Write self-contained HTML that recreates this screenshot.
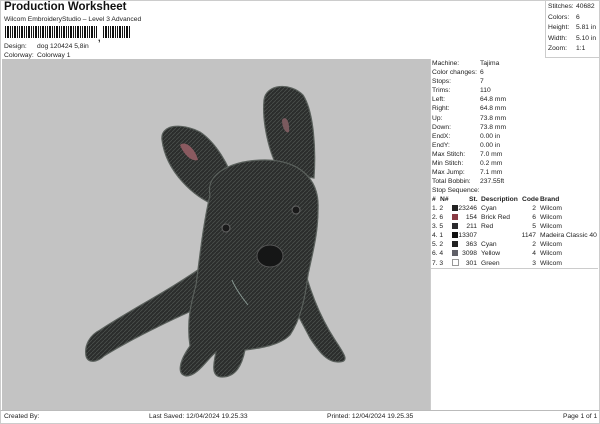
<!DOCTYPE html>
<html><head><style>
body{margin:0;width:600px;height:424px;background:#fff;position:relative;overflow:hidden;font-family:"Liberation Sans",sans-serif;color:#222}
.a{position:absolute;white-space:nowrap}
.s{font-size:6.7px;line-height:9px}
</style></head><body>
<div class="a" style="left:4px;top:1px;font-size:11.5px;font-weight:bold;color:#111">Production Worksheet</div>
<div class="a s" style="left:4px;top:15px">Wilcom EmbroideryStudio – Level 3 Advanced</div>
<div class="a" style="left:5px;top:26px;width:125px;height:12px;background:repeating-linear-gradient(90deg,#111 0 1px,#fff 1px 2px,#111 2px 4px,#fff 4px 5px,#111 5px 6px,#fff 6px 7px)"></div>
<div class="a" style="left:98px;top:26px;width:4px;height:14px;background:#fff"></div>
<div class="a" style="left:98px;top:33px;font-size:9px;font-weight:bold">,</div>
<div class="a s" style="left:4px;top:42px">Design:</div><div class="a s" style="left:37px;top:42px">dog 120424 5,8in</div>
<div class="a s" style="left:4px;top:51px">Colorway:</div><div class="a s" style="left:37px;top:51px">Colorway 1</div>
<div class="a" style="left:0;top:0;width:598px;height:410px;border:1px solid #ccc;border-bottom:none"></div>
<div class="a" style="left:545px;top:0;width:53px;height:57px;border-left:1px solid #ccc;border-bottom:1px solid #ccc"></div>
<div class="a s" style="left:548px;top:2px;line-height:10.5px">Stitches:<br>Colors:<br>Height:<br>Width:<br>Zoom:</div>
<div class="a s" style="left:576px;top:2px;line-height:10.5px">40682<br>6<br>5.81 in<br>5.10 in<br>1:1</div>
<div class="a" style="left:2px;top:59px;width:428px;height:351px;background:#c3c3c3"></div>
<div class="a" style="left:430px;top:59px;width:1px;height:351px;background:#ccc"></div>
<svg class="a" style="left:2px;top:59px" width="428" height="351" viewBox="2 59 428 351">
<defs><pattern id="f" width="4" height="4" patternUnits="userSpaceOnUse"><rect width="4" height="4" fill="#2b2d2c"/><path d="M0 4L4 0" stroke="#4a4f4c" stroke-width="0.8"/></pattern></defs>
<g fill="url(#f)" stroke="#5a605c" stroke-width="1.2">
<path d="M162 140C160 125 180 122 200 132C215 142 230 165 234 185L215 205C195 198 166 172 162 140Z"/>
<path d="M264 100C266 84 290 82 303 95C314 112 316 150 314 178L280 172C268 152 262 120 264 100Z"/>
<path d="M205 265C170 290 130 310 100 330C90 335 84 345 86 356C88 364 98 362 104 356C130 340 170 320 205 305Z"/>
<path d="M300 250C308 290 322 320 335 340C345 355 350 362 338 362C326 362 318 350 310 338L290 300Z"/>
<path d="M210 195C205 172 235 160 265 160C298 160 320 178 318 210C318 235 312 255 308 275C305 300 300 320 290 335C280 345 262 348 245 350C242 365 236 377 222 377C210 377 214 362 216 352C208 358 198 376 186 376C176 374 180 360 190 346C186 320 192 300 196 285C200 255 203 225 210 195Z"/>
</g>
<path d="M180 145C185 140 195 148 198 160C192 162 184 155 180 145Z" fill="#8a5a60"/>
<path d="M282 120C285 115 290 120 289 132C286 134 282 128 282 120Z" fill="#7a5a5e"/>
<ellipse cx="270" cy="256" rx="13" ry="11" fill="#151616" stroke="#555" stroke-width="1"/>
<circle cx="226" cy="228" r="4" fill="#1a1a1a" stroke="#666"/>
<circle cx="296" cy="210" r="4" fill="#1a1a1a" stroke="#666"/>
<path d="M232 280C236 290 244 300 248 305" stroke="#8a9a94" fill="none" stroke-width="1"/>
</svg>
<div class="a s" style="left:432px;top:59px;line-height:9.1px">Machine:<br>Color changes:<br>Stops:<br>Trims:<br>Left:<br>Right:<br>Up:<br>Down:<br>EndX:<br>EndY:<br>Max Stitch:<br>Min Stitch:<br>Max Jump:<br>Total Bobbin:</div>
<div class="a s" style="left:480px;top:59px;line-height:9.1px">Tajima<br>6<br>7<br>110<br>64.8 mm<br>64.8 mm<br>73.8 mm<br>73.8 mm<br>0.00 in<br>0.00 in<br>7.0 mm<br>0.2 mm<br>7.1 mm<br>237.55ft</div>
<div class="a s" style="left:432px;top:186px">Stop Sequence:</div>
<div class="a s" style="left:432px;top:195px;width:166px;height:9px;text-decoration:underline;font-weight:bold">
<span class="a" style="left:0">#</span><span class="a" style="left:8px">N#</span><span class="a" style="left:37px">St.</span><span class="a" style="left:49px">Description</span><span class="a" style="left:90px">Code</span><span class="a" style="left:108px">Brand</span></div>
<div class="a s" style="left:432px;top:204px;line-height:9.1px">1. 2<br>2. 6<br>3. 5<br>4. 1<br>5. 2<br>6. 4<br>7. 3</div>
<div class="a" style="left:452px;top:205px;width:6px;height:6px;background:#222"></div>
<div class="a" style="left:452px;top:214px;width:6px;height:6px;background:#8a3a44"></div>
<div class="a" style="left:452px;top:223px;width:6px;height:6px;background:#2a2a2e"></div>
<div class="a" style="left:452px;top:232px;width:6px;height:6px;background:#111"></div>
<div class="a" style="left:452px;top:241px;width:6px;height:6px;background:#222"></div>
<div class="a" style="left:452px;top:250px;width:6px;height:6px;background:#606068"></div>
<div class="a" style="left:452px;top:259px;width:5px;height:5px;border:1px solid #999;background:#fff"></div>
<div class="a s" style="left:456px;top:204px;width:21px;text-align:right;line-height:9.1px">23246<br>154<br>211<br>13307<br>363<br>3098<br>301</div>
<div class="a s" style="left:481px;top:204px;line-height:9.1px">Cyan<br>Brick Red<br>Red<br><br>Cyan<br>Yellow<br>Green</div>
<div class="a s" style="left:516px;top:204px;width:20px;text-align:right;line-height:9.1px">2<br>6<br>5<br>1147<br>2<br>4<br>3</div>
<div class="a s" style="left:540px;top:204px;line-height:9.1px">Wilcom<br>Wilcom<br>Wilcom<br>Madeira Classic 40<br>Wilcom<br>Wilcom<br>Wilcom</div>
<div class="a" style="left:431px;top:268px;width:167px;height:1px;background:#ccc"></div>
<div class="a" style="left:0;top:410px;width:598px;height:12px;border:1px solid #ccc;border-top:1px solid #bbb"></div>
<div class="a s" style="left:4px;top:412px">Created By:</div>
<div class="a s" style="left:149px;top:412px">Last Saved: 12/04/2024 19.25.33</div>
<div class="a s" style="left:327px;top:412px">Printed: 12/04/2024 19.25.35</div>
<div class="a s" style="left:563px;top:412px">Page 1 of 1</div>
</body></html>
